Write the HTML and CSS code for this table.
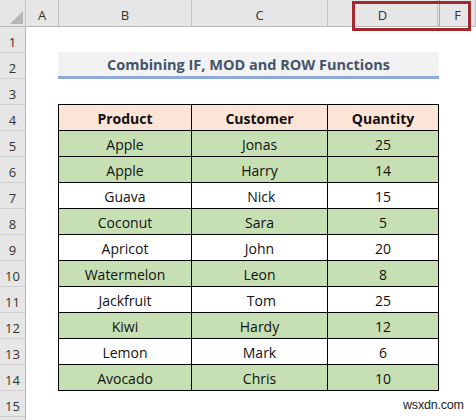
FILE: index.html
```html
<!DOCTYPE html>
<html>
<head>
<meta charset="utf-8">
<link rel="stylesheet" href="styles.css">
</head>
<body>
<div class="sheet">
  <div class="colhdr">
    <div class="corner"><span class="tri"></span></div>
    <div class="ch w-a">A</div>
    <div class="ch w-b">B</div>
    <div class="ch w-c">C</div>
    <div class="ch w-d">D</div>
    <div class="ch w-e"></div>
    <div class="ch w-f">F</div>
  </div>
  <div class="main">
    <div class="rowhdr">
      <div class="rh">1</div><div class="rh">2</div><div class="rh">3</div><div class="rh">4</div>
      <div class="rh">5</div><div class="rh">6</div><div class="rh">7</div><div class="rh">8</div>
      <div class="rh">9</div><div class="rh">10</div><div class="rh">11</div><div class="rh">12</div>
      <div class="rh">13</div><div class="rh">14</div><div class="rh">15</div>
    </div>
    <div class="content">
      <div class="spacer1"></div>
      <div class="title">Combining IF, MOD and ROW Functions</div>
      <div class="spacer3"></div>
      <div class="tbl">
        <div class="tr head"><div class="td">Product</div><div class="td">Customer</div><div class="td">Quantity</div></div>
        <div class="tr g"><div class="td">Apple</div><div class="td">Jonas</div><div class="td">25</div></div>
        <div class="tr g"><div class="td">Apple</div><div class="td">Harry</div><div class="td">14</div></div>
        <div class="tr"><div class="td">Guava</div><div class="td">&nbsp;Nick</div><div class="td">15</div></div>
        <div class="tr g"><div class="td">Coconut</div><div class="td">Sara</div><div class="td">5</div></div>
        <div class="tr"><div class="td">Apricot</div><div class="td">John</div><div class="td">20</div></div>
        <div class="tr g"><div class="td">Watermelon</div><div class="td">Leon</div><div class="td">8</div></div>
        <div class="tr"><div class="td">Jackfruit</div><div class="td">&nbsp;Tom</div><div class="td">25</div></div>
        <div class="tr g"><div class="td">Kiwi</div><div class="td">Hardy</div><div class="td">12</div></div>
        <div class="tr"><div class="td">Lemon</div><div class="td">Mark</div><div class="td">6</div></div>
        <div class="tr g"><div class="td">Avocado</div><div class="td">Chris</div><div class="td">10</div></div>
      </div>
    </div>
  </div>
  <div class="highlight"></div>
  <div class="watermark">wsxdn.com</div>
</div>
</body>
</html>
```

FILE: styles.css
```css
* { box-sizing: border-box; }
html, body { margin: 0; padding: 0; background: #fff; }
body { width: 476px; height: 420px; overflow: hidden; font-family: "Open Sans", "Liberation Sans", sans-serif; }
.sheet { position: relative; width: 476px; height: 420px; display: flex; flex-direction: column; overflow: hidden; }

.colhdr { display: flex; flex: none; height: 27px; background: #e6e6e6; border-bottom: 1px solid #b8b8b8; }
.corner { width: 26px; border-right: 1px solid #c4c4c4; position: relative; }
.tri { position: absolute; right: 2px; bottom: 2px; width: 0; height: 0;
  border-left: 13px solid transparent; border-bottom: 13px solid #b5b5b5; }
.ch { border-right: 1px solid #c4c4c4; font-size: 13px; color: #333; display: flex;
  align-items: center; justify-content: center; padding-top: 3px; }
.w-a { width: 33px; }
.w-b { width: 133px; }
.w-c { width: 136px; }
.w-d { width: 110px; }
.w-e { width: 2px; border-right: 1px solid #aaa; }
.w-f { width: 36px; border-right: 1px solid #c4c4c4; }

.main { display: flex; flex: 1; }
.rowhdr { width: 26px; background: #e6e6e6; border-right: 1px solid #b8b8b8; }
.rh { height: 26px; border-bottom: 1px solid #cfcfcf; font-size: 13px; color: #333;
  display: flex; align-items: center; justify-content: center; padding-top: 5px; }

.content { padding-left: 32px; }
.spacer1 { height: 25px; }
.title { width: 381px; height: 27px; background: #f2f2f2; border-bottom: 3px solid #8eaadb;
  font-weight: 700; font-size: 14.5px; color: #44546a; display: flex; align-items: center;
  justify-content: center; padding-top: 1px; }
.spacer3 { height: 25px; }

.tbl { width: 381px; border-left: 1px solid #000; border-top: 1px solid #000; }
.tr { display: flex; height: 26px; }
.tr.head { background: #fce4d6; font-weight: 700; }
.tr.g { background: #c6e0b4; }
.td { border-right: 1px solid #000; border-bottom: 1px solid #000; font-size: 14px; color: #111;
  display: flex; align-items: center; justify-content: center; white-space: pre; padding-top: 1px; }
.td:nth-child(1) { width: 133px; }
.td:nth-child(2) { width: 136px; }
.td:nth-child(3) { width: 111px; }

.highlight { position: absolute; left: 352px; top: 1px; width: 119px; height: 30px;
  border: 3px solid #a3282d; }
.watermark { position: absolute; left: 403px; top: 398px; font-family: "Liberation Sans", Arial, sans-serif;
  font-size: 12.5px; color: #222; letter-spacing: -0.2px; }
```
